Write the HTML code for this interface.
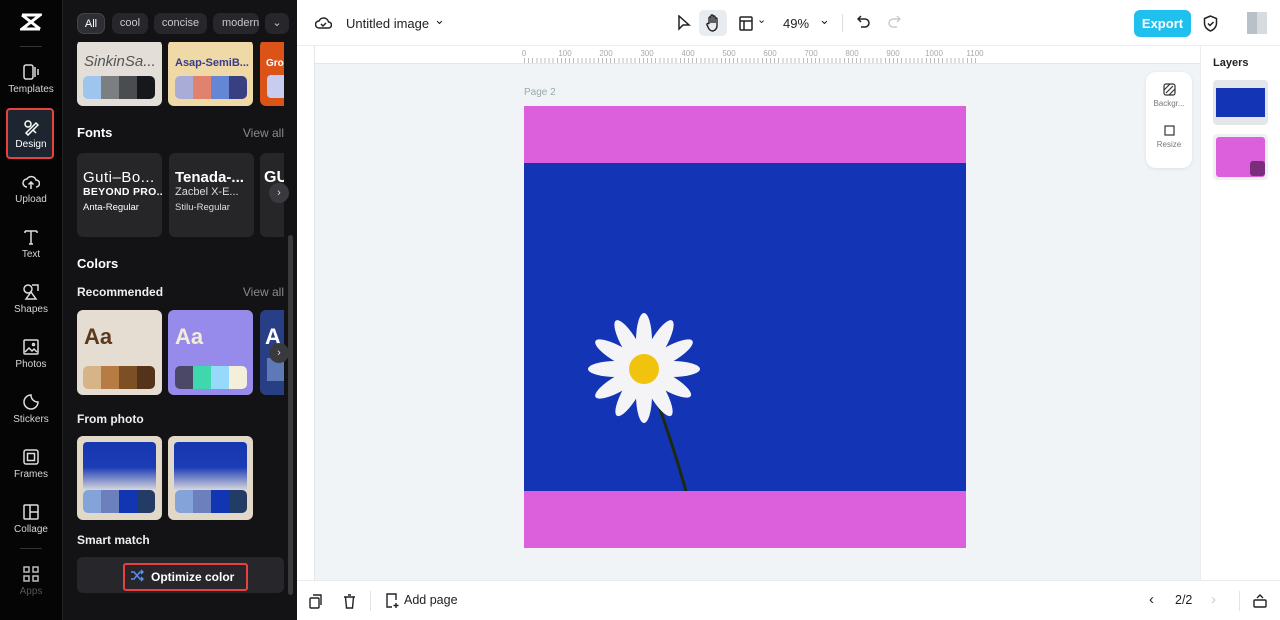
<!DOCTYPE html>
<html><head><meta charset="utf-8"><style>
*{box-sizing:border-box;margin:0;padding:0}
body{width:1280px;height:620px;overflow:hidden;font-family:"Liberation Sans",sans-serif;position:relative;background:#fff}
.abs{position:absolute}
#nav{left:0;top:0;width:63px;height:620px;background:#050505;border-right:1px solid #222}
.ni{position:absolute;left:0;width:62px;text-align:center;color:#d6d6d6;font-size:10px}
.ni svg{display:block;margin:0 auto 3px}
#panel{left:63px;top:0;width:234px;height:620px;background:#131316}
.chip{position:absolute;top:13px;height:21px;border-radius:7px;background:#27272b;color:#c8c8c8;font-size:11px;line-height:21px;text-align:center;white-space:nowrap}
.h{position:absolute;color:#fff;font-weight:bold;font-size:13px}
.va{position:absolute;right:13px;color:#8a8a8e;font-size:12px}
.card{position:absolute;border-radius:6px;overflow:hidden}
.sw{position:absolute;height:23px;display:flex;border-radius:5px;overflow:hidden}
.sw i{flex:1}
.fc{position:absolute;top:153px;width:85px;height:84px;background:#262629;border-radius:6px;color:#fff;padding:16px 6px 0;white-space:nowrap;overflow:hidden}
#top{left:297px;top:0;width:983px;height:46px;background:#fff;border-bottom:1px solid #eceef0}
#canvas{left:297px;top:46px;width:903px;height:534px;background:#f1f4f7}
#right{left:1200px;top:46px;width:80px;height:534px;background:#fff;border-left:1px solid #ebedf0}
#bottom{left:297px;top:580px;width:983px;height:40px;background:#fff;border-top:1px solid #e8eaed}
.rl{position:absolute;top:3px;font-size:8px;color:#aaa;transform:translateX(-50%)}
</style></head><body>
<div id="nav" class="abs">
 <svg class="abs" style="left:20px;top:13px" width="22" height="18" viewBox="0 0 22 18"><path d="M2 2h18L2 16h18M2 2l18 14" stroke="#fff" stroke-width="3" fill="none"/></svg>
 <div class="abs" style="left:20px;top:46px;width:22px;height:1px;background:#333"></div>
 <div class="ni" style="top:63px"><svg width="18" height="18" viewBox="0 0 18 18" fill="none" stroke="#ddd" stroke-width="1.5"><rect x="2" y="2" width="9" height="14" rx="2"/><path d="M13 4v10M16 6v6"/></svg>Templates</div>
 <div class="abs" style="left:6px;top:108px;width:48px;height:51px;border:2px solid #e8413f;border-radius:4px;background:#1d2530"></div>
 <div class="ni" style="top:118px;color:#fff"><svg width="18" height="18" viewBox="0 0 18 18" fill="none" stroke="#fff" stroke-width="1.5"><circle cx="6" cy="6" r="3"/><path d="M4 15l10-10 2 2-10 10zM11 12l3 3"/></svg>Design</div>
 <div class="ni" style="top:173px"><svg width="18" height="18" viewBox="0 0 18 18" fill="none" stroke="#ddd" stroke-width="1.5"><path d="M5 14a4 4 0 010-8 5 5 0 019 1 3.5 3.5 0 010 7M9 9v7M6.5 11.5L9 9l2.5 2.5"/></svg>Upload</div>
 <div class="ni" style="top:228px"><svg width="18" height="18" viewBox="0 0 18 18" fill="none" stroke="#ddd" stroke-width="1.5"><path d="M3 3h12M9 3v13M3 3v2M15 3v2M7 16h4"/></svg>Text</div>
 <div class="ni" style="top:283px"><svg width="18" height="18" viewBox="0 0 18 18" fill="none" stroke="#ddd" stroke-width="1.5"><circle cx="6" cy="6" r="4"/><path d="M10 2h6v6M4 16l5-7 5 7z"/></svg>Shapes</div>
 <div class="ni" style="top:338px"><svg width="18" height="18" viewBox="0 0 18 18" fill="none" stroke="#ddd" stroke-width="1.5"><rect x="2" y="2" width="14" height="14" rx="1"/><path d="M3 14l4-4 3 3 2-2 3 3"/><circle cx="11.5" cy="6.5" r="1"/></svg>Photos</div>
 <div class="ni" style="top:393px"><svg width="18" height="18" viewBox="0 0 18 18" fill="none" stroke="#ddd" stroke-width="1.5"><path d="M16 9a7 7 0 11-7-7c0 4 3 7 7 7z"/></svg>Stickers</div>
 <div class="ni" style="top:448px"><svg width="18" height="18" viewBox="0 0 18 18" fill="none" stroke="#ddd" stroke-width="1.5"><rect x="2" y="2" width="14" height="14" rx="2"/><rect x="5.5" y="5.5" width="7" height="7"/></svg>Frames</div>
 <div class="ni" style="top:503px"><svg width="18" height="18" viewBox="0 0 18 18" fill="none" stroke="#ddd" stroke-width="1.5"><rect x="2" y="2" width="14" height="14" rx="1"/><path d="M8 2v14M8 9h8"/></svg>Collage</div>
 <div class="abs" style="left:20px;top:548px;width:22px;height:1px;background:#333"></div>
 <div class="ni" style="top:565px;color:#555"><svg width="18" height="18" viewBox="0 0 18 18" fill="none" stroke="#bbb" stroke-width="1.5"><rect x="2" y="2" width="5" height="5"/><rect x="11" y="2" width="5" height="5"/><rect x="2" y="11" width="5" height="5"/><rect x="11" y="11" width="5" height="5"/></svg>Apps</div>
</div>
<div id="panel" class="abs">
 <div class="chip" style="left:14px;width:28px;background:#2e2f34;border:1px solid #444;color:#fff">All</div>
 <div class="chip" style="left:49px;width:36px">cool</div>
 <div class="chip" style="left:91px;width:53px">concise</div>
 <div class="chip" style="left:150px;width:46px;text-align:left;padding-left:9px;overflow:hidden">modern</div>
 <div class="chip" style="left:202px;width:24px">⌄</div>
 <div class="card" style="left:14px;top:40px;width:85px;height:66px;background:#e3dfd8"><div style="color:#555;font-style:italic;font-size:15px;padding:13px 0 0 7px;white-space:nowrap">SinkinSa...</div></div>
 <div class="sw" style="left:20px;top:76px;width:72px"><i style="background:#9ec6ec"></i><i style="background:#7c7f82"></i><i style="background:#4a4c50"></i><i style="background:#16181b"></i></div>
 <div class="card" style="left:105px;top:40px;width:85px;height:66px;background:#efd9a6"><div style="color:#3a3a8a;font-weight:bold;font-size:11px;padding:17px 0 0 7px;white-space:nowrap">Asap-SemiB...</div></div>
 <div class="sw" style="left:112px;top:76px;width:72px"><i style="background:#a9acd6"></i><i style="background:#e0826e"></i><i style="background:#6486d4"></i><i style="background:#394081"></i></div>
 <div class="card" style="left:197px;top:40px;width:24px;height:66px;background:#db5316;border-radius:6px 0 0 6px"><div style="color:#fff;font-size:10px;font-weight:bold;padding:18px 0 0 6px">Gro</div><div style="background:#c8cdf0;margin:6px 0 0 7px;height:23px;border-radius:4px 0 0 4px"></div></div>
 <div class="abs" style="left:0;top:34px;width:234px;height:8px;background:#131316"></div>
 <div class="h" style="left:14px;top:125px">Fonts</div><div class="va" style="top:126px">View all</div>
 <div class="fc" style="left:14px"><div style="font-size:15px;letter-spacing:0.5px">Guti–Bo...</div><div style="font-size:10.5px;font-weight:bold;letter-spacing:0.3px">BEYOND PRO...</div><div style="font-size:9.5px;margin-top:4px">Anta-Regular</div></div>
 <div class="fc" style="left:106px"><div style="font-size:15px;font-weight:bold">Tenada-...</div><div style="font-size:11px;color:#ddd">Zacbel X-E...</div><div style="font-size:9.5px;margin-top:4px;color:#ddd">Stilu-Regular</div></div>
 <div class="fc" style="left:197px;width:24px;padding-left:4px;border-radius:6px 0 0 6px"><div style="font-size:16px;font-weight:bold">GU</div></div>
 <div class="abs" style="left:206px;top:183px;width:20px;height:20px;border-radius:50%;background:#3a3a3e;color:#ddd;font-size:11px;text-align:center;line-height:20px">›</div>
 <div class="h" style="left:14px;top:256px">Colors</div>
 <div class="abs" style="left:14px;top:285px;color:#eee;font-size:12px;font-weight:bold">Recommended</div><div class="va" style="top:285px">View all</div>
 <div class="card" style="left:14px;top:310px;width:85px;height:85px;background:#e6ddd2"><div style="color:#5a3a1e;font-weight:bold;font-size:22px;padding:14px 0 0 7px">Aa</div></div>
 <div class="sw" style="left:20px;top:366px;width:72px"><i style="background:#d7b488"></i><i style="background:#b77c44"></i><i style="background:#7d4f25"></i><i style="background:#53341a"></i></div>
 <div class="card" style="left:105px;top:310px;width:85px;height:85px;background:#968bea"><div style="color:#f3ecd9;font-weight:bold;font-size:22px;padding:14px 0 0 7px">Aa</div></div>
 <div class="sw" style="left:112px;top:366px;width:72px"><i style="background:#4b4767"></i><i style="background:#3fd7ae"></i><i style="background:#97d9fa"></i><i style="background:#f4efda"></i></div>
 <div class="card" style="left:197px;top:310px;width:24px;height:85px;background:#283f86;border-radius:6px 0 0 6px"><div style="color:#fff;font-weight:bold;font-size:22px;padding:14px 0 0 5px">A</div><div style="background:#5d7ab6;margin:8px 0 0 7px;height:23px"></div></div>
 <div class="abs" style="left:206px;top:343px;width:20px;height:20px;border-radius:50%;background:#3a3a3e;color:#ddd;font-size:11px;text-align:center;line-height:20px">›</div>
 <div class="abs" style="left:14px;top:412px;color:#eee;font-size:12px;font-weight:bold">From photo</div>
 <div class="card" style="left:14px;top:436px;width:85px;height:84px;background:#e2d8c8"><div style="margin:6px;height:50px;border-radius:4px;background:linear-gradient(#1737b0 0%,#1a3cb5 50%,#e8e4e0 100%)"></div></div>
 <div class="sw" style="left:20px;top:490px;width:72px"><i style="background:#84a3d8"></i><i style="background:#6c80bd"></i><i style="background:#1236b1"></i><i style="background:#233c66"></i></div>
 <div class="card" style="left:105px;top:436px;width:85px;height:84px;background:#e2d8c8"><div style="margin:6px;height:50px;border-radius:4px;background:linear-gradient(#1737b0 0%,#1a3cb5 50%,#e8e4e0 100%)"></div></div>
 <div class="sw" style="left:112px;top:490px;width:72px"><i style="background:#84a3d8"></i><i style="background:#6c80bd"></i><i style="background:#1236b1"></i><i style="background:#233c66"></i></div>
 <div class="abs" style="left:14px;top:533px;color:#eee;font-size:12px;font-weight:bold">Smart match</div>
 <div class="abs" style="left:14px;top:557px;width:207px;height:36px;background:#27272b;border-radius:6px"></div>
 <div class="abs" style="left:60px;top:563px;width:125px;height:28px;border:2px solid #e8413f;border-radius:3px;color:#fff;font-weight:bold;font-size:12px;line-height:24px;padding-left:26px">Optimize color</div>
 <svg class="abs" style="left:67px;top:569px" width="14" height="13" viewBox="0 0 14 13" fill="none" stroke="#5a8cf5" stroke-width="1.5"><path d="M1 3h3l6 7h3M1 10h3l6-7h3M11 1l2 2-2 2M11 8l2 2-2 2"/></svg>
 <div class="abs" style="left:225px;top:235px;width:5px;height:360px;background:#3a3a3d;border-radius:3px"></div>
</div>
<div class="abs" style="left:297px;top:285px;width:7px;height:48px;background:#2a2a2d;border-radius:0 5px 5px 0"></div>
<div id="top" class="abs">
 <svg class="abs" style="left:18px;top:15px" width="17" height="15" viewBox="0 0 17 15" fill="none" stroke="#222" stroke-width="1.5"><path d="M4 13a3.5 3.5 0 010-7 5 5 0 019.5 1 3 3 0 010 6z"/><path d="M6 9l2 2 3-3"/></svg>
 <div class="abs" style="left:49px;top:16px;font-size:13px;color:#222">Untitled image</div>
 <div class="abs" style="left:137px;top:12px;font-size:13px;color:#222">⌄</div>
 <svg class="abs" style="left:380px;top:15px" width="14" height="16" viewBox="0 0 14 16" fill="none" stroke="#222" stroke-width="1.5"><path d="M2 1v13l4-4h6z"/></svg>
 <div class="abs" style="left:402px;top:10px;width:28px;height:26px;border-radius:5px;background:#e8ebef"></div>
 <svg class="abs" style="left:408px;top:14px" width="16" height="18" viewBox="0 0 16 18" fill="none" stroke="#222" stroke-width="1.4"><path d="M4 10V4a1 1 0 012 0v5V2a1 1 0 012 0v7V3a1 1 0 012 0v6V5a1 1 0 012 0v7a5 5 0 01-5 5H8a5 5 0 01-4-2l-2-4a1 1 0 012-1z"/></svg>
 <svg class="abs" style="left:442px;top:16px" width="14" height="15" viewBox="0 0 14 15" fill="none" stroke="#222" stroke-width="1.5"><rect x="1" y="1" width="12" height="13" rx="1"/><path d="M1 5h12M5 5v9"/></svg>
 <div class="abs" style="left:460px;top:13px;font-size:11px;color:#222">⌄</div>
 <div class="abs" style="left:486px;top:16px;font-size:13px;color:#222">49%</div>
 <div class="abs" style="left:522px;top:12px;font-size:13px;color:#222">⌄</div>
 <div class="abs" style="left:545px;top:14px;width:1px;height:18px;background:#ddd"></div>
 <svg class="abs" style="left:560px;top:15px" width="14" height="15" viewBox="0 0 14 15" fill="none" stroke="#222" stroke-width="1.5"><path d="M4 1L1 4l3 3M1 4h7a4 4 0 010 8H4"/></svg>
 <svg class="abs" style="left:590px;top:15px" width="14" height="15" viewBox="0 0 14 15" fill="none" stroke="#ccc" stroke-width="1.5"><path d="M10 1l3 3-3 3M13 4H6a4 4 0 000 8h4"/></svg>
 <div class="abs" style="left:837px;top:10px;width:57px;height:27px;border-radius:6px;background:#1fbfee;color:#fff;font-weight:bold;font-size:13px;text-align:center;line-height:27px">Export</div>
 <svg class="abs" style="left:906px;top:15px" width="15" height="17" viewBox="0 0 15 17" fill="none" stroke="#222" stroke-width="1.5"><path d="M7.5 1L1.5 3.5V8c0 4 3 7 6 8 3-1 6-4 6-8V3.5z"/><path d="M5 8.5l2 2 3.5-3.5"/></svg>
 <div class="abs" style="left:950px;top:12px;width:20px;height:22px;background:linear-gradient(90deg,#b8c0c8 50%,#d6dbe0 50%)"></div>
</div>
<div id="canvas" class="abs">
 <div class="abs" style="left:0;top:0;width:903px;height:18px;background:#fff;border-bottom:1px solid #e4e7ea"></div>
 <div class="abs" style="left:0;top:0;width:18px;height:534px;background:#fff;border-right:1px solid #e4e7ea"></div>
 <span class="rl" style="left:227px">0</span><span class="rl" style="left:268px">100</span><span class="rl" style="left:309px">200</span><span class="rl" style="left:350px">300</span><span class="rl" style="left:391px">400</span><span class="rl" style="left:432px">500</span><span class="rl" style="left:473px">600</span><span class="rl" style="left:514px">700</span><span class="rl" style="left:555px">800</span><span class="rl" style="left:596px">900</span><span class="rl" style="left:637px">1000</span><span class="rl" style="left:678px">1100</span>
 <div class="abs" style="left:227px;top:12px;width:452px;height:5px;background:repeating-linear-gradient(90deg,#bbb 0 1px,transparent 1px 4.1px)"></div>
 <div class="abs" style="left:227px;top:41px;font-size:10px;color:#9aa">Page 2</div>
 <div class="abs" style="left:227px;top:60px;width:442px;height:442px;background:#1335b5">
  <div class="abs" style="left:0;top:0;width:442px;height:57px;background:#dc60dc"></div>
  <div class="abs" style="left:0;top:385px;width:442px;height:57px;background:#dc60dc"></div>
  <svg class="abs" style="left:50px;top:205px" width="140" height="180" viewBox="0 0 140 180">
   <path d="M72 60Q95 120 112 180" stroke="#1d2a10" stroke-width="3" fill="none"/>
   <g fill="#f4f4f6" transform="translate(70,58)">
    <ellipse rx="8" ry="28" transform="rotate(0) translate(0,-28)"/><ellipse rx="8" ry="28" transform="rotate(30) translate(0,-28)"/><ellipse rx="8" ry="28" transform="rotate(60) translate(0,-28)"/><ellipse rx="8" ry="28" transform="rotate(90) translate(0,-28)"/><ellipse rx="8" ry="28" transform="rotate(120) translate(0,-26)"/><ellipse rx="8" ry="28" transform="rotate(150) translate(0,-26)"/><ellipse rx="8" ry="28" transform="rotate(180) translate(0,-26)"/><ellipse rx="8" ry="28" transform="rotate(210) translate(0,-26)"/><ellipse rx="8" ry="28" transform="rotate(240) translate(0,-28)"/><ellipse rx="8" ry="28" transform="rotate(270) translate(0,-28)"/><ellipse rx="8" ry="28" transform="rotate(300) translate(0,-28)"/><ellipse rx="8" ry="28" transform="rotate(330) translate(0,-28)"/>
    <circle r="15" fill="#f2c30e"/>
   </g>
  </svg>
 </div>
 <div class="abs" style="left:849px;top:26px;width:46px;height:96px;background:#fff;border-radius:10px;box-shadow:0 1px 4px rgba(0,0,0,.08);font-size:8px;color:#777;text-align:center">
  <svg style="display:block;margin:11px auto 3px" width="13" height="13" viewBox="0 0 13 13" fill="none" stroke="#333" stroke-width="1.2"><rect x="1" y="1" width="11" height="11" rx="2"/><path d="M3 10l7-7M1 7l6-6M6 12l6-6"/></svg>Backgr...
  <svg style="display:block;margin:16px auto 3px" width="13" height="13" viewBox="0 0 13 13" fill="none" stroke="#333" stroke-width="1.2"><rect x="2" y="2" width="9" height="9"/></svg>Resize
 </div>
</div>
<div id="right" class="abs">
 <div class="abs" style="left:12px;top:11px;font-size:11px;font-weight:bold;color:#222">Layers</div>
 <div class="abs" style="left:12px;top:34px;width:55px;height:45px;background:#e4e7ea;border-radius:4px"><div style="margin:8px 3px;height:29px;background:#1335b5"></div></div>
 <div class="abs" style="left:12px;top:88px;width:55px;height:46px;background:#eef0f2;border-radius:4px"><div style="margin:3px;height:40px;background:#dc60dc;border-radius:3px"></div></div>
 <div class="abs" style="left:49px;top:115px;width:15px;height:15px;background:#7a2d7a;border-radius:3px"></div>
</div>
<div id="bottom" class="abs">
 <svg class="abs" style="left:12px;top:13px" width="14" height="15" viewBox="0 0 14 15" fill="none" stroke="#222" stroke-width="1.4"><rect x="1" y="4" width="9" height="10" rx="1"/><path d="M4 1h8v10"/></svg>
 <svg class="abs" style="left:46px;top:13px" width="13" height="15" viewBox="0 0 13 15" fill="none" stroke="#222" stroke-width="1.4"><path d="M1 3h11M5 1h3M2.5 3l1 11h6l1-11"/></svg>
 <div class="abs" style="left:73px;top:10px;width:1px;height:20px;background:#e3e3e3"></div>
 <svg class="abs" style="left:88px;top:12px" width="14" height="16" viewBox="0 0 14 16" fill="none" stroke="#222" stroke-width="1.4"><path d="M7 14H2V1h9v6M11 10v5M8.5 12.5h5"/></svg>
 <div class="abs" style="left:107px;top:12px;font-size:12.5px;color:#222">Add page</div>
 <div class="abs" style="left:852px;top:10px;font-size:15px;color:#222">‹</div>
 <div class="abs" style="left:878px;top:12px;font-size:12.5px;color:#222">2/2</div>
 <div class="abs" style="left:914px;top:10px;font-size:15px;color:#ccc">›</div>
 <div class="abs" style="left:942px;top:10px;width:1px;height:20px;background:#e3e3e3"></div>
 <svg class="abs" style="left:956px;top:12px" width="14" height="16" viewBox="0 0 14 16" fill="none" stroke="#222" stroke-width="1.4"><rect x="1" y="7" width="12" height="7" rx="1"/><path d="M4 5l3-3 3 3"/></svg>
</div>
</body></html>
